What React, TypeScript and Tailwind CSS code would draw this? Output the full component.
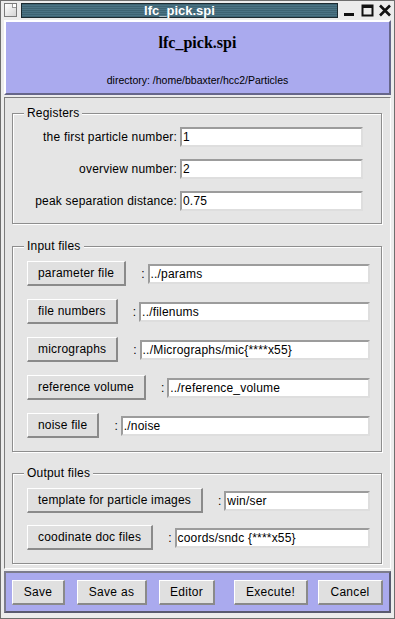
import React from "react";

const registers = [
  { label: "the first particle number:", value: "1" },
  { label: "overview number:", value: "2" },
  { label: "peak separation distance:", value: "0.75" },
];

const inputFiles = [
  { label: "parameter file", value: "../params" },
  { label: "file numbers", value: "../filenums" },
  { label: "micrographs", value: "../Micrographs/mic{****x55}" },
  { label: "reference volume", value: "../reference_volume" },
  { label: "noise file", value: "./noise" },
];

const outputFiles = [
  { label: "template for particle images", value: "win/ser" },
  { label: "coodinate doc files", value: "coords/sndc {****x55}" },
];

const actions = [
  { label: "Save", cls: "w-[53px]" },
  { label: "Save as", cls: "ml-[12px] w-[70px]" },
  { label: "Editor", cls: "ml-[12px] w-[56px]" },
  { label: "Execute!", cls: "ml-[19px] w-[74px]" },
  { label: "Cancel", cls: "ml-[10px] w-[65px]" },
];

const raised =
  "border-t border-l border-white border-r-2 border-b-2 border-r-[#8a8a8a] border-b-[#8a8a8a] bg-[#e0e0e0]";

function Entry({ value, className = "" }: { value: string; className?: string }) {
  return (
    <div
      className={`h-[20px] border-2 border-t-[#9c9c9c] border-l-[#9c9c9c] border-r-[#dedede] border-b-[#dedede] bg-white pl-[1px] text-[12px] leading-[16px] tracking-[0.2px] whitespace-nowrap overflow-hidden ${className}`}
    >
      {value}
    </div>
  );
}

function Group({
  title,
  className = "",
  children,
}: {
  title: string;
  className?: string;
  children: React.ReactNode;
}) {
  return (
    <div
      className={`relative border border-[#8e8e8e] shadow-[inset_1px_1px_0_#fff,1px_1px_0_#fff] ${className}`}
    >
      <span className="absolute left-[11px] top-[-8px] bg-[#e5e5e5] px-[3px] text-[12px] leading-[15px] tracking-[0.2px]">
        {title}
      </span>
      {children}
    </div>
  );
}

function FileRow({ label, value }: { label: string; value: string }) {
  return (
    <div className="flex items-center">
      <button className={`h-[25px] px-[10px] text-[12px] tracking-[0.2px] ${raised}`}>{label}</button>
      <span className="ml-[15px] text-[12px]">:</span>
      <Entry value={value} className="ml-[3px] flex-1" />
    </div>
  );
}

function TitleControls() {
  return (
    <svg width="52" height="15" viewBox="0 0 52 15" className="ml-[3px]">
      <rect x="3" y="10" width="10" height="3" fill="#111" />
      <rect x="21.5" y="2.5" width="10" height="10" fill="none" stroke="#111" strokeWidth="2" />
      <rect x="21" y="2" width="11" height="3" fill="#111" />
      <path d="M39 2.5 L49 12.5 M49 2.5 L39 12.5" stroke="#111" strokeWidth="2.6" />
    </svg>
  );
}

export default function App() {
  return (
    <div className="flex h-[619px] w-[395px] flex-col overflow-hidden border border-[#6e6e6e] bg-[#ececec] font-['Liberation_Sans',Arial,sans-serif] text-black">
      {/* title bar */}
      <div className="flex h-[19px] items-start pl-[3px] pt-[2px]">
        <div className="relative h-[14px] w-[13px] border border-[#7a7a7a] bg-[linear-gradient(135deg,#ffffff,#d4d4d4)]">
          <div className="absolute right-0 top-0 h-[4px] w-[4px] border-b border-l border-[#9a9a9a] bg-white" />
        </div>
        <div className="ml-[4px] flex h-[15px] w-[317px] items-center justify-center border border-[#1c2a30] bg-[repeating-linear-gradient(180deg,#3d6372_0px,#3d6372_1px,#4b7384_1px,#4b7384_2px)]">
          <span className="text-[13px] font-bold leading-[13px] text-white">lfc_pick.spi</span>
        </div>
        <TitleControls />
      </div>

      {/* header */}
      <div className="mx-[3px] flex h-[75px] flex-col items-center border-2 border-t-white border-l-white border-r-[#66668a] border-b-[#66668a] bg-[#aaaaee]">
        <div className="mt-[11px] font-['Liberation_Serif',serif] text-[16px] font-bold leading-[20px]">
          lfc_pick.spi
        </div>
        <div className="mt-[20px] text-[10.5px] leading-[14px]">directory: /home/bbaxter/hcc2/Particles</div>
      </div>

      {/* body */}
      <div className="mx-[3px] mt-[2px] border border-t-[#7c7c7c] border-l-[#7c7c7c] border-r-white border-b-white bg-[#e5e5e5] pb-[4px] pl-[7px] pr-[8px] pt-[15px]">
        <Group title="Registers" className="pb-[12px] pt-[13px]">
          <div className="grid grid-cols-[164px_183px] gap-x-[3px] gap-y-[12px] text-[12px] tracking-[0.2px]">
            {registers.map((r) => (
              <React.Fragment key={r.label}>
                <div className="self-center text-right leading-[16px]">{r.label}</div>
                <Entry value={r.value} />
              </React.Fragment>
            ))}
          </div>
        </Group>

        <Group title="Input files" className="mt-[22px] pb-[13px] pl-[14px] pr-[11px] pt-[14px]">
          <div className="flex flex-col gap-[13px]">
            {inputFiles.map((f) => (
              <FileRow key={f.label} {...f} />
            ))}
          </div>
        </Group>

        <Group title="Output files" className="mt-[21px] pb-[13px] pl-[14px] pr-[11px] pt-[14px]">
          <div className="flex flex-col gap-[12px]">
            {outputFiles.map((f) => (
              <FileRow key={f.label} {...f} />
            ))}
          </div>
        </Group>
      </div>

      {/* action bar */}
      <div className="mx-[3px] mt-[2px] flex border-2 border-t-[#7c7c8c] border-l-[#7c7c8c] border-r-[#5a5a70] border-b-[#5a5a70] bg-[#aaaaee] pb-[6px] pl-[6px] pt-[7px]">
        {actions.map((a) => (
          <button key={a.label} className={`h-[25px] text-[12px] tracking-[0.3px] ${raised} ${a.cls}`}>
            {a.label}
          </button>
        ))}
      </div>
    </div>
  );
}
